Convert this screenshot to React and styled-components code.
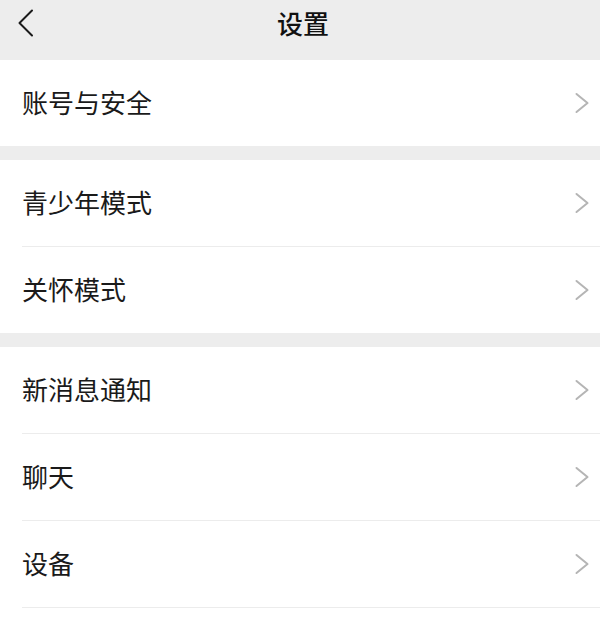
import styled, { createGlobalStyle } from "styled-components";

const GlobalStyle = createGlobalStyle`
  html, body {
    margin: 0;
    padding: 0;
    background: #ededed;
  }
  body {
    font-family: "Noto Sans CJK SC", "Noto Sans", sans-serif;
    color: #1a1a1a;
  }
`;

const sections = [
  ["账号与安全"],
  ["青少年模式", "关怀模式"],
  ["新消息通知", "聊天", "设备", ""],
];

const Page = styled.div`
  width: 600px;
  height: 633px;
  overflow: hidden;
  background: #ededed;
`;

const Header = styled.header`
  position: relative;
  height: 60px;
  display: flex;
  align-items: flex-start;
  justify-content: center;
`;

const BackButton = styled.button`
  position: absolute;
  left: 14px;
  top: 6px;
  width: 24px;
  height: 34px;
  padding: 0;
  border: 0;
  background: none;
  display: flex;
  align-items: center;
  justify-content: center;
`;

const Title = styled.h1`
  margin: 0;
  padding-top: 5px;
  padding-left: 6px;
  font-size: 26px;
  line-height: 36px;
  font-weight: 500;
  color: #111;
`;

const Group = styled.section`
  background: #fff;
  & + & {
    margin-top: 14px;
  }
`;

const Row = styled.div`
  height: 86px;
  padding-left: 22px;
  display: flex;
  align-items: center;
  justify-content: space-between;
  & + & {
    border-top: 1px solid #ececec;
    margin-left: 22px;
    padding-left: 0;
    height: 86px;
  }
`;

const Label = styled.span`
  font-size: 26px;
  line-height: 36px;
  color: #1a1a1a;
  margin-top: -2px;
`;

const Chevron = styled.svg`
  width: 14px;
  height: 22px;
  margin-right: 11px;
`;

const Arrow = () => (
  <Chevron viewBox="0 0 14 22">
    <polyline
      points="1.5,2 12.5,11 1.5,20"
      fill="none"
      stroke="#b5b5b5"
      strokeWidth="2"
      strokeLinecap="round"
      strokeLinejoin="round"
    />
  </Chevron>
);

const App = () => {
  return (
    <Page>
      <GlobalStyle />
      <Header>
        <BackButton aria-label="返回">
          <svg width="18" height="30" viewBox="0 0 18 30">
            <polyline
              points="15,2.5 2.5,15 15,27.5"
              fill="none"
              stroke="#1a1a1a"
              strokeWidth="2"
              strokeLinecap="round"
              strokeLinejoin="round"
            />
          </svg>
        </BackButton>
        <Title>设置</Title>
      </Header>
      {sections.map((items, i) => (
        <Group key={i}>
          {items.map((item, j) => (
            <Row key={j}>
              <Label>{item}</Label>
              {item && <Arrow />}
            </Row>
          ))}
        </Group>
      ))}
    </Page>
  );
};

export default App;
